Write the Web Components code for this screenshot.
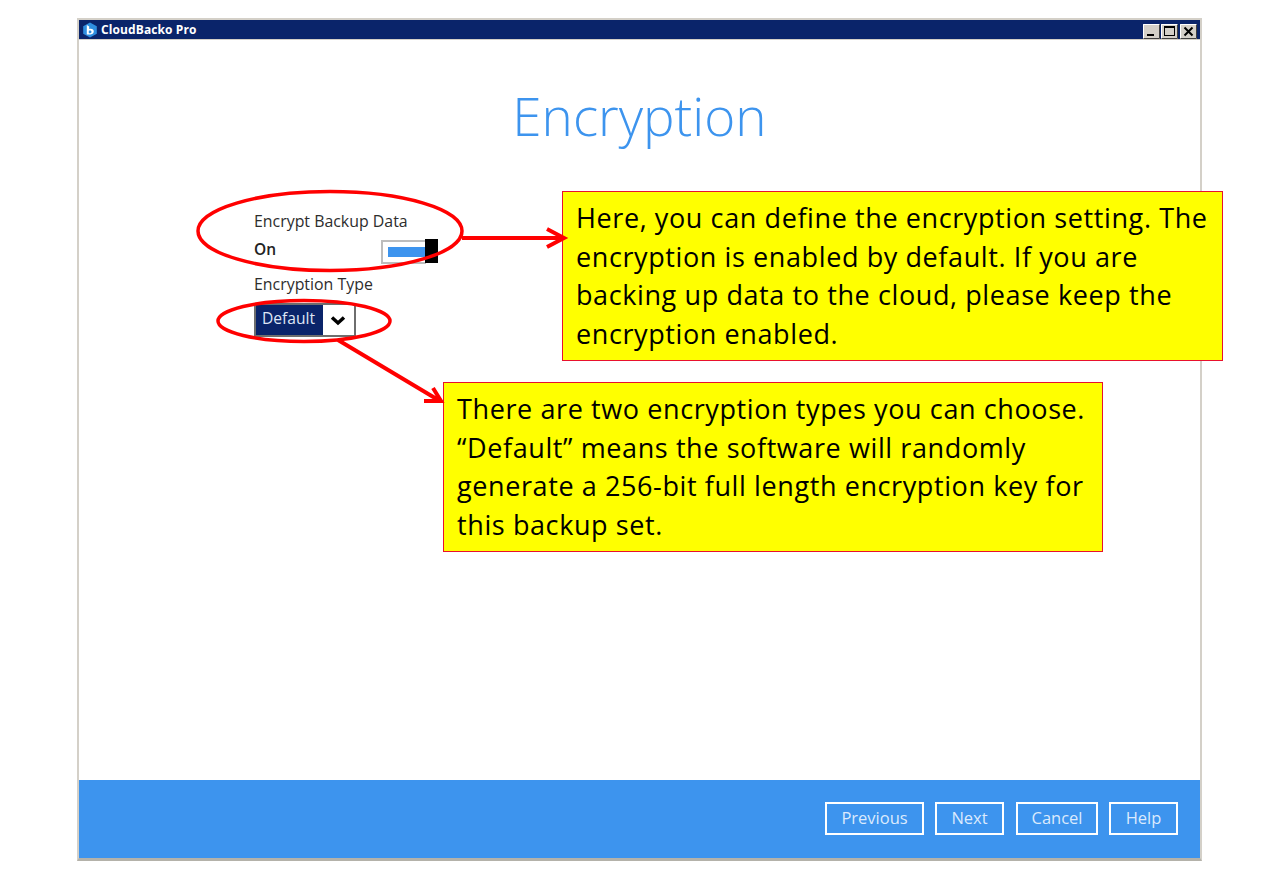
<!DOCTYPE html>
<html>
<head>
<meta charset="utf-8">
<title>Encryption</title>
<style>
  html, body { margin: 0; background: #fff; }
  body { width: 1268px; height: 888px; overflow: hidden; position: relative; font-family: "Open Sans", sans-serif; }
</style>
</head>
<body>
<app-window caption="CloudBacko Pro">
  <page-title>Encryption</page-title>
  <setting-form></setting-form>
  <wizard-footer slot="footer">
    <wizard-button style="width:99px">Previous</wizard-button>
    <wizard-button style="width:69px;margin-left:11px">Next</wizard-button>
    <wizard-button style="width:82px;margin-left:12px">Cancel</wizard-button>
    <wizard-button style="width:69px;margin-left:11px">Help</wizard-button>
  </wizard-footer>
</app-window>
<call-out style="left:562px;top:191px;width:661px;height:170px">Here, you can define the encryption setting. The encryption is enabled by default. If you are backing up data to the cloud, please keep the encryption enabled.</call-out>
<call-out style="left:443px;top:382px;width:660px;height:170px">There are two encryption types you can choose. “Default” means the software will randomly generate a 256-bit full length encryption key for this backup set.</call-out>
<note-marks></note-marks>

<script>
// window frame with title bar, content and footer slot
class AppWindow extends HTMLElement {
  constructor() {
    super();
    this.attachShadow({ mode: "open" }).innerHTML = `
<style>
  :host { display: block; width: 1125px; height: 843px; margin: 18px 0 0 77px; box-sizing: border-box; }
  .frame { height: 100%; box-sizing: border-box; display: flex; flex-direction: column;
    border: 2px solid #d4d0c8; border-bottom: 3px solid #b4b2aa; background: #fff; }
  .bar { height: 20px; flex: none; background: #0a246a; display: flex; align-items: center; padding: 0 3px 0 3px; gap: 3px; box-sizing: border-box;
    border-bottom: 1px solid #d4d0c8; }
  .cap { color: #fff; font: 700 12px "Open Sans", sans-serif; letter-spacing: .1px; }
  .btns { margin-left: auto; display: flex; gap: 2px; }
  .btns i { display: block; width: 17px; height: 15px; margin-left: 0; }
  .btns i:nth-child(2) { margin-left: -1px; }
  .body { flex: 1; display: flex; flex-direction: column; min-height: 0; }
  ::slotted([slot=footer]) { flex: none; }
</style>
<div class="frame">
  <div class="bar">
    <svg width="16" height="16" viewBox="0 0 16 16">
      <path d="M8 .5 14.800 4.200v7.600L8 15.500 1.200 11.800V4.200z" fill="#2f8fe0"/>
      <path d="M4.800 3 7.200 4.600v2.300c2.600-.8 4.600.4 4.600 2.400 0 2.100-2 3.300-3.600 3.300H4.800zM6.800 8.800v2.400c1.300.3 2.700-.2 2.700-1.300S8.100 8.300 6.800 8.800z" fill="#fff" fill-rule="evenodd"/>
    </svg>
    <span class="cap"></span>
    <span class="btns">
      <i><svg width="17" height="15"><rect width="17" height="15" fill="#d4d0c8"/><path d="M.5 14.500V.5h16" fill="none" stroke="#fff"/><path d="M.5 14.500h16V.5" fill="none" stroke="#404040"/><rect x="4" y="10" width="7" height="2" fill="#000"/></svg></i>
      <i><svg width="17" height="15"><rect width="17" height="15" fill="#d4d0c8"/><path d="M.5 14.500V.5h16" fill="none" stroke="#fff"/><path d="M.5 14.500h16V.5" fill="none" stroke="#404040"/><rect x="3.500" y="2.500" width="10" height="9" fill="none" stroke="#000"/><rect x="3" y="2" width="11" height="2" fill="#000"/></svg></i>
      <i><svg width="17" height="15"><rect width="17" height="15" fill="#d4d0c8"/><path d="M.5 14.500V.5h16" fill="none" stroke="#fff"/><path d="M.5 14.500h16V.5" fill="none" stroke="#404040"/><path d="M4.500 3.500 12.500 11.500M12.500 3.500 4.500 11.500" stroke="#000" stroke-width="2"/></svg></i>
    </span>
  </div>
  <div class="body"><slot></slot></div>
  <slot name="footer"></slot>
</div>`;
    this.shadowRoot.querySelector(".cap").textContent = this.getAttribute("caption");
  }
}

class PageTitle extends HTMLElement {
  constructor() {
    super();
    this.attachShadow({ mode: "open" }).innerHTML = `
<style>
  :host { display: block; text-align: center; color: #3d94ee; font: 300 53px/70px "Open Sans", sans-serif; padding: 41px 0 0 0; height: 70px; }
</style><slot></slot>`;
  }
}

// the two settings on the page
class SettingForm extends HTMLElement {
  constructor() {
    super();
    this.attachShadow({ mode: "open" }).innerHTML = `
<style>
  :host { display: block; margin: 60px 0 0 175px; width: 186px; color: #2d2d2d; font: 15.900px/20px "Open Sans", sans-serif; flex: 1; }
  .label { height: 20px; white-space: nowrap; }
  .row { display: flex; justify-content: space-between; align-items: center; height: 30px; margin-top: 3px; }
  .on { font-weight: 600; font-size: 15.500px; color: #222; }
  .toggle { width: 57px; height: 25px; box-sizing: border-box; position: relative; margin: 5px 2px 0 0; }
  .toggle .track { position: absolute; inset: 1px 12px 0 0; border: 2px solid #bdbdbd; border-right: 0; padding: 5px; background: #fff; }
  .toggle .track b { display: block; height: 100%; background: #3d94ee; margin-right: -5px; }
  .toggle .thumb { position: absolute; right: 0; top: 0; width: 13px; height: 24px; background: #000; }
  .type { margin-top: 10px; }
  .select { display: flex; width: 102px; height: 34px; box-sizing: border-box; margin-top: 9px; border: 2px solid #6e6e6e; background: #fff; }
  .select span { flex: none; width: 67px; background: #0a246a; color: #dfe6f5; padding-left: 6px; box-sizing: border-box; line-height: 26px; font-size: 15.600px; }
  .select svg { margin: 10px 0 0 7px; }
</style>
<div class="label">Encrypt Backup Data</div>
<div class="row"><span class="on">On</span>
  <span class="toggle"><span class="track"><b></b></span><span class="thumb"></span></span></div>
<div class="label type">Encryption Type</div>
<div class="select"><span>Default</span>
  <svg width="16" height="11" viewBox="0 0 16 11"><path d="M2 2.500 8 8 14 2.500" fill="none" stroke="#000" stroke-width="3.500"/></svg></div>`;
  }
}

class WizardFooter extends HTMLElement {
  constructor() {
    super();
    this.attachShadow({ mode: "open" }).innerHTML = `
<style>
  :host { display: flex; justify-content: flex-end; align-items: flex-start; height: 78px; box-sizing: border-box;
    background: #3d94ee; padding: 22px 22px 0 0; }
</style><slot></slot>`;
  }
}

class WizardButton extends HTMLElement {
  constructor() {
    super();
    this.attachShadow({ mode: "open" }).innerHTML = `
<style>
  :host { display: flex; align-items: center; justify-content: center; height: 33px; box-sizing: border-box;
    border: 2px solid #fff; color: #dbeafd; font: 16.500px "Open Sans", sans-serif; padding-bottom: 3px; }
</style><slot></slot>`;
  }
}

// yellow annotation box, lies over the window
class CallOut extends HTMLElement {
  constructor() {
    super();
    this.attachShadow({ mode: "open" }).innerHTML = `
<style>
  :host { position: absolute; display: block; box-sizing: border-box; background: #ffff00; border: 1px solid #e8112d;
    color: #000; font: 27px/38.500px "Open Sans", sans-serif; letter-spacing: .6px; padding: 7px 13px 0 13px; }
</style><slot></slot>`;
  }
}

// red ellipses and arrows drawn over everything
class NoteMarks extends HTMLElement {
  constructor() {
    super();
    this.attachShadow({ mode: "open" }).innerHTML = `
<style>
  :host { position: absolute; left: 0; top: 0; display: block; width: 1268px; height: 888px; pointer-events: none; }
</style>
<svg width="1268" height="888" fill="none" stroke="#ff0000" stroke-width="3.500">
  <ellipse cx="330" cy="231" rx="132" ry="39.500"/>
  <ellipse cx="304" cy="321" rx="86" ry="20.500"/>
  <path d="M462 238H562M547 229 564 238 547 247" stroke-width="4"/>
  <path d="M338 340 440 401M424 401H441L433 388" stroke-width="4"/>
</svg>`;
  }
}

customElements.define("app-window", AppWindow);
customElements.define("page-title", PageTitle);
customElements.define("setting-form", SettingForm);
customElements.define("wizard-footer", WizardFooter);
customElements.define("wizard-button", WizardButton);
customElements.define("call-out", CallOut);
customElements.define("note-marks", NoteMarks);
</script>
</body>
</html>
